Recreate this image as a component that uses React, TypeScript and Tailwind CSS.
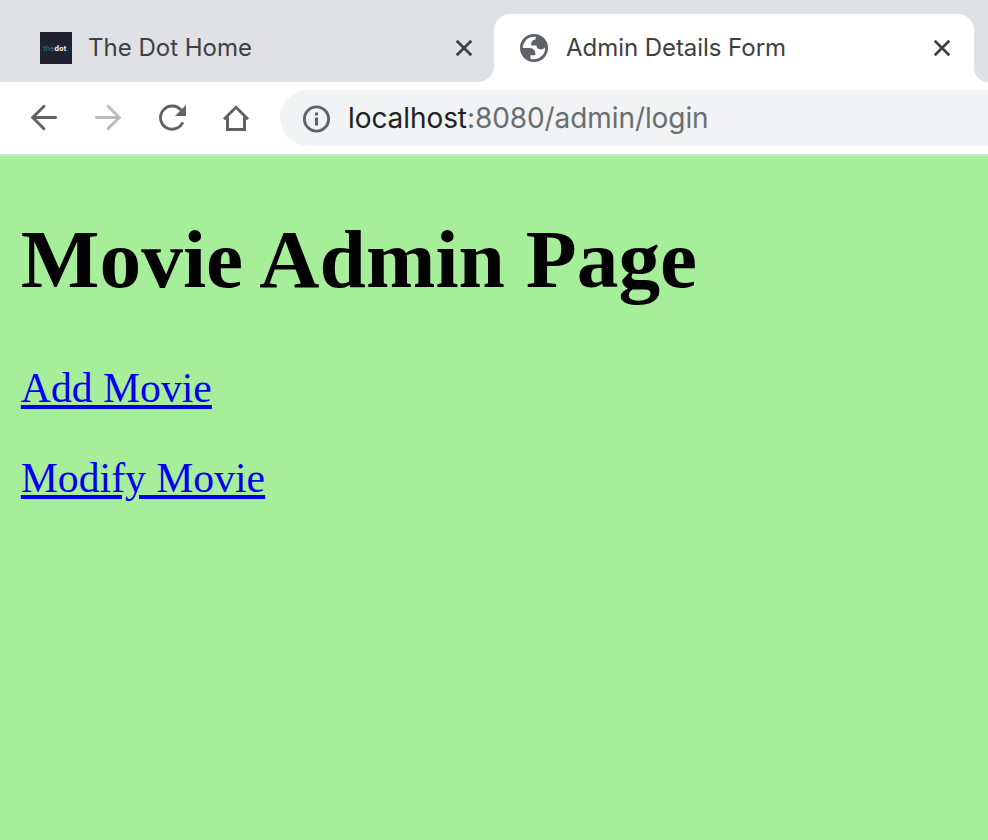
import React from "react";

function CloseIcon() {
  return (
    <svg className="h-4 w-4 shrink-0" viewBox="0 0 16 16" fill="none" stroke="#3c4043" strokeWidth="2.7" strokeLinecap="square">
      <path d="M1.7 1.7 14.3 14.3M14.3 1.7 1.7 14.3" />
    </svg>
  );
}

function GlobeIcon() {
  return (
    <svg className="h-7 w-7 shrink-0" viewBox="2 2 20 20" fill="#5f6368">
      <path
        fillRule="evenodd"
        d="M12 2a10 10 0 1 0 0 20 10 10 0 0 0 0-20zM4 12h4.4c3.407.022 4.922 1.73 4.543 5.127H9.488v2.47a8.004 8.004 0 0 0 10.498-8.083C19.327 12.504 18.332 13 17 13c-2.137 0-3.206-.916-3.206-2.75h-3.748c-.274-2.728.683-4.092 2.87-4.092 0-.975.327-1.597.811-1.97A8.004 8.004 0 0 0 4 12z"
      />
    </svg>
  );
}

function BackIcon() {
  return (
    <svg className="h-8 w-8" viewBox="0 0 32 32" fill="none" stroke="#5f6368" strokeWidth="2.9" strokeLinecap="round">
      <path d="M27.6 15.5H5M16 4.2 4.7 15.5 16 26.8" />
    </svg>
  );
}

function ForwardIcon() {
  return (
    <svg className="h-8 w-8" viewBox="0 0 32 32" fill="none" stroke="#bababc" strokeWidth="2.9" strokeLinecap="round">
      <path d="M4.4 15.5H27M16 4.2 27.3 15.5 16 26.8" />
    </svg>
  );
}

function ReloadIcon() {
  return (
    <svg className="h-8 w-8" viewBox="0 0 32 32">
      <path d="M25.2 8.4A11.6 11.6 0 1 0 26.8 20.2" fill="none" stroke="#5f6368" strokeWidth="2.9" />
      <path d="M30 3V14H19z" fill="#5f6368" />
    </svg>
  );
}

function HomeIcon() {
  return (
    <svg className="h-8 w-8" viewBox="0 0 32 32" fill="none" stroke="#5f6368" strokeWidth="3">
      <path d="M4 17.3 16 5.3 28 17.3" />
      <path d="M7.5 14.5V27.5H24.5V14.5" />
    </svg>
  );
}

function InfoIcon() {
  return (
    <svg className="mt-px h-7 w-7 shrink-0" viewBox="0 0 28 28">
      <circle cx="14.5" cy="14" r="12.1" fill="none" stroke="#5f6368" strokeWidth="2.9" />
      <path d="M13 7.5h3v3h-3zM13 12.5h3v8h-3z" fill="#5f6368" />
    </svg>
  );
}

function TabStrip() {
  return (
    <div className="flex h-[82px] bg-white text-[24px] leading-8 text-[#3c4043]">
      <div className="flex w-[494px] items-center rounded-br-[16px] bg-[#dfe1e5] pt-3.5 pr-[22px] pl-10">
        <div className="flex h-8 w-8 items-center justify-center bg-[#202231] text-[7px] leading-none tracking-[0.25px]">
          <span className="text-[#35877f]">the</span>
          <span className="font-bold text-white">dot</span>
          <span className="text-[#35877f]">.</span>
        </div>
        <span className="ml-4 flex-1 whitespace-nowrap">The Dot Home</span>
        <CloseIcon />
      </div>
      <div className="w-[480px] bg-[#dfe1e5] pt-3.5">
        <div className="flex h-full items-center rounded-t-[16px] bg-white pr-6 pl-[26px]">
          <GlobeIcon />
          <span className="ml-[18px] flex-1 tracking-[-0.05px] whitespace-nowrap">Admin Details Form</span>
          <CloseIcon />
        </div>
      </div>
      <div className="flex-1 rounded-bl-[16px] bg-[#dfe1e5]" />
    </div>
  );
}

function Toolbar() {
  return (
    <div className="flex h-[74px] items-start border-b-2 border-[#dadce0] bg-white pt-2 pl-7">
      <div className="flex h-14 w-[252px] items-center gap-8">
        <BackIcon />
        <ForwardIcon />
        <ReloadIcon />
        <HomeIcon />
      </div>
      <div className="flex h-14 flex-1 items-center rounded-l-full bg-[#f1f3f4] pl-[22px]">
        <InfoIcon />
        <span className="ml-[18px] text-[28px] tracking-[-0.08px] whitespace-nowrap text-[#202124]">
          localhost<span className="text-[#6a6d70]">:8080/admin/login</span>
        </span>
      </div>
    </div>
  );
}

export default function App() {
  return (
    <div className="flex h-[840px] w-[988px] flex-col overflow-hidden font-['Inter',sans-serif]">
      <TabStrip />
      <Toolbar />
      <main className="flex-1 bg-[#a7ee9a] pt-[55px] pl-[20.8px] font-['Liberation_Serif',serif] text-[41.7px] leading-[48px]">
        <h1 className="text-[83.4px] leading-[96px] font-bold text-black">Movie Admin Page</h1>
        <p className="mt-[57px]">
          <a href="#" className="text-[#0000ee] underline">Add Movie</a>
        </p>
        <p className="mt-[42px]">
          <a href="#" className="text-[#0000ee] underline">Modify Movie</a>
        </p>
      </main>
    </div>
  );
}
